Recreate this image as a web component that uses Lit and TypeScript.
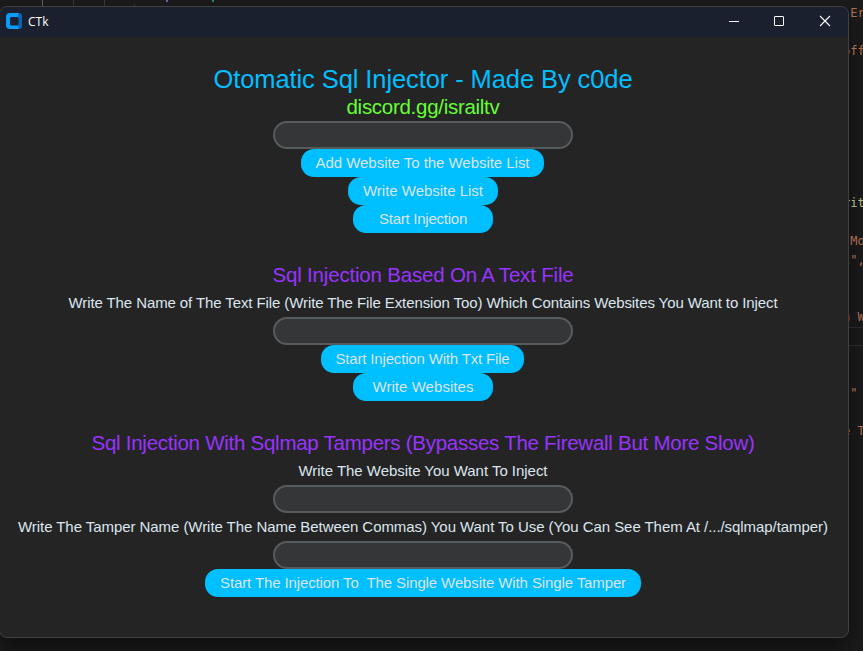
import { LitElement, html, css, svg } from "lit";
import { customElement, property } from "lit/decorators.js";

/** Line of text whose tracking is adjusted so that it spans `width` pixels. */
@customElement("fit-text")
class FitText extends LitElement {
  @property() text = "";
  @property({ type: Number }) width = 0;

  static styles = css`
    :host { display: inline-block; white-space: pre; }
  `;

  firstUpdated() {
    const span = this.renderRoot.querySelector("span") as HTMLElement;
    const natural = span.getBoundingClientRect().width;
    const gap = (this.width - natural) / this.text.length;
    span.style.letterSpacing = `${gap.toFixed(4)}px`;
  }

  render() {
    return html`<span>${this.text}</span>`;
  }
}

type Row =
  | { kind: "title" | "link" | "heading" | "label"; text: string; width: number }
  | { kind: "button"; text: string; width: number; box: number }
  | { kind: "entry" }
  | { kind: "gap" };

const ROWS: Row[] = [
  { kind: "gap" },
  { kind: "title", text: "Otomatic Sql Injector - Made By c0de", width: 419 },
  { kind: "link", text: "discord.gg/israiltv", width: 153 },
  { kind: "entry" },
  { kind: "button", text: "Add Website To the Website List", width: 214, box: 243 },
  { kind: "button", text: "Write Website List", width: 120, box: 150 },
  { kind: "button", text: "Start Injection", width: 88, box: 140 },
  { kind: "gap" },
  { kind: "heading", text: "Sql Injection Based On A Text File", width: 301 },
  { kind: "label", text: "Write The Name of The Text File (Write The File Extension Too) Which Contains Websites You Want to Inject", width: 709 },
  { kind: "entry" },
  { kind: "button", text: "Start Injection With Txt File", width: 174, box: 203 },
  { kind: "button", text: "Write Websites", width: 101, box: 140 },
  { kind: "gap" },
  { kind: "heading", text: "Sql Injection With Sqlmap Tampers (Bypasses The Firewall But More Slow)", width: 663 },
  { kind: "label", text: "Write The Website You Want To Inject", width: 249 },
  { kind: "entry" },
  { kind: "label", text: "Write The Tamper Name (Write The Name Between Commas) You Want To Use (You Can See Them At /.../sqlmap/tamper)", width: 810 },
  { kind: "entry" },
  { kind: "button", text: "Start The Injection To  The Single Website With Single Tamper", width: 406, box: 436 },
];

/* Visible tail of each editor line, keyed by line number. */
const CODE: Record<number, { text: string; tone: string }> = {
  0: { text: " Er", tone: "string" },
  2: { text: "off", tone: "string" },
  10: { text: "rit", tone: "call" },
  12: { text: " Mo", tone: "string" },
  13: { text: "l\",", tone: "string" },
  16: { text: "n W", tone: "string" },
  20: { text: " \"", tone: "string" },
  22: { text: "e T", tone: "string" },
};

@customElement("app-root")
class AppRoot extends LitElement {
  static styles = css`
    :host {
      display: block;
      position: relative;
      width: 863px;
      height: 651px;
      overflow: hidden;
      background: #1b1b1b;
      font-family: "Liberation Sans", Arial, sans-serif;
    }
    .guides { position: absolute; left: 0; top: 0; }
    .editor {
      position: absolute;
      left: 843px;
      top: 4px;
      width: 20px;
      overflow: hidden;
      font: 12px/19px "DejaVu Sans Mono", monospace;
    }
    .line { height: 19px; box-sizing: border-box; white-space: pre; }
    .string { color: #ad6b50; }
    .call { color: #b5b58c; }
    .current { border-top: 1px solid #282828; border-bottom: 1px solid #282828; }
    .window {
      position: absolute;
      left: -1px;
      top: 6px;
      width: 850px;
      height: 632px;
      box-sizing: border-box;
      border: 1px solid #414141;
      border-radius: 8px;
      overflow: hidden;
      background: #242424;
      display: flex;
      flex-direction: column;
    }
    .shade {
      position: absolute;
      left: -1px;
      top: 6px;
      width: 850px;
      height: 632px;
      border-radius: 8px;
      box-shadow: 0 12px 22px rgba(0, 0, 0, 0.48);
    }
    .bar {
      flex: none;
      height: 30px;
      display: flex;
      align-items: center;
      background: #1a202e;
      color: #fff;
    }
    .logo { margin: -2px 6px 0 6px; flex: none; }
    .name {
      flex: 1;
      font: 12px/16px "Open Sans", "Noto Sans", sans-serif;
      margin-top: -1px;
    }
    .controls { flex: none; display: block; }
    .rows {
      width: 846px;
      display: flex;
      flex-direction: column;
      align-items: center;
    }
    .row {
      height: 28px;
      line-height: 28px;
      font-size: 15px;
      color: #dce4ee;
      white-space: pre;
      display: flex;
      justify-content: center;
      box-sizing: border-box;
    }
    .title { font-size: 25.5px; color: #00bfff; line-height: 29px; }
    .link { font-size: 20.5px; color: #66ff33; }
    .heading { font-size: 20.5px; color: #9933ff; }
    .entry {
      width: 300px;
      border: 2px solid #565b5e;
      border-radius: 14px;
      background: #343638;
    }
    .button {
      border: 0;
      padding: 0;
      margin: 0;
      font-family: inherit;
      border-radius: 13px;
      background: #00bfff;
    }
    .odd { margin-right: 1px; }
  `;

  private row(r: Row) {
    switch (r.kind) {
      case "gap":
        return html`<div class="row"></div>`;
      case "entry":
        return html`<div class="row entry"></div>`;
      case "button":
        return html`<button class="row button ${r.box % 2 ? "odd" : ""}" style="width:${r.box}px"><fit-text .text=${r.text} .width=${r.width}></fit-text></button>`;
      default:
        return html`<div class="row ${r.kind}"><fit-text .text=${r.text} .width=${r.width}></fit-text></div>`;
    }
  }

  render() {
    const lines = Array.from({ length: 33 }, (_, i) => i);
    const guides = [
      [42, 0, "#606060"], [73, 0, "#393939"], [104, 0, "#393939"], [134, 4, "#393939"],
    ] as const;
    return html`
      <svg class="guides" width="260" height="8" viewBox="0 0 260 8">
        ${guides.map(([x, y, c]) => svg`<rect x=${x} y=${y} width="1" height=${8 - y} fill=${c} />`)}
        <rect x="166" y="0" width="2" height="2" fill="#805f9d" />
        <rect x="212" y="0" width="2" height="2" fill="#278b78" />
      </svg>
      <div class="shade"></div>
      <div class="editor">
        ${lines.map((i) => html`<div class="line ${CODE[i]?.tone ?? ""} ${i === 17 ? "current" : ""}">${CODE[i]?.text ?? ""}</div>`)}
      </div>
      <div class="window">
        <div class="bar">
          <svg class="logo" width="16" height="16" viewBox="0 0 16 16">
            <rect width="16" height="16" rx="4" fill="#0a9cff" />
            <path d="M12 4L12.6 0Q16 0.4 16 4V12Q16 15.6 12.6 16L12 12Z" fill="#0863b2" />
            <rect x="4" y="4" width="8.5" height="8.5" rx="1.5" fill="#1a202e" />
          </svg>
          <span class="name"><fit-text .text=${"CTk"} .width=${20.5}></fit-text></span>
          <svg class="controls" width="138" height="30" viewBox="0 0 138 30" fill="none" stroke="#fff">
            <path d="M19 14.5H29" />
            <rect x="64.5" y="9.5" width="9" height="9" rx="0.5" />
            <path d="M110 9L120 19M120 9L110 19" stroke-width="1.1" />
          </svg>
        </div>
        <div class="rows">${ROWS.map((r) => this.row(r))}</div>
      </div>
    `;
  }
}
